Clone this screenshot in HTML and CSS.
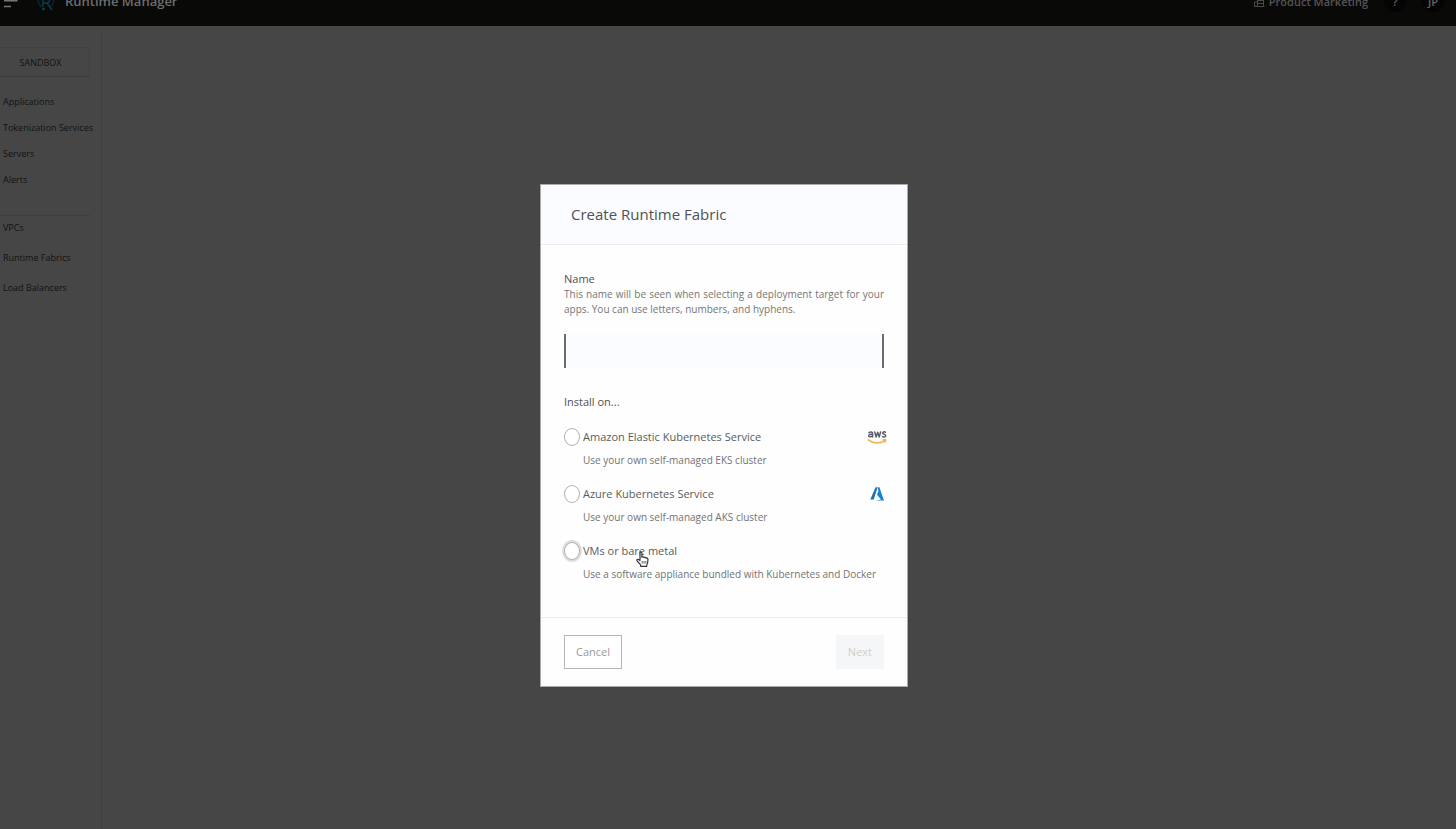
FILE: index.html
```html
<!DOCTYPE html>
<html lang="en">
<head>
<meta charset="utf-8">
<title>Runtime Manager</title>
<link rel="stylesheet" href="styles.css">
</head>
<body>
<div class="app">
  <header class="topbar">
    <button class="icon-button menu" aria-label="Menu">
      <svg width="16" height="14" viewBox="0 0 16 14" fill="none" stroke="#777" stroke-width="1.6"><path d="M2 1.500h13.500M2 6.700h13.500M2 12.500h7"/></svg>
    </button>
    <svg class="logo" width="18" height="20" viewBox="0 0 18 20" fill="none" stroke="#0b3a4d" stroke-width="1.5"><path d="M5 16C2 14 1 11 1.500 8M16.500 8C17 11 16 14 13 16" stroke="#0a2530"/><path d="M6 15.500V6h3.500a3 3 0 0 1 0 6H6M10 12l5 7"/><circle cx="6.500" cy="18" r=".8"/></svg>
    <span class="product">Runtime Manager</span>
    <a class="org" href="#">
      <svg width="12" height="12" viewBox="0 0 12 12" fill="none" stroke="#4a4a4a"><path d="M1.500 11.500V7h3M4.500 11.500V1.500h6v10M1 11.500h10.500M4.500 5.500h6M4.500 8.500h6"/></svg>
      Product Marketing
    </a>
    <button class="icon-button round">?</button>
    <button class="icon-button round">JP</button>
  </header>
  <div class="workspace">
    <nav class="sidebar">
      <button class="environment">SANDBOX</button>
      <div class="links">
        <a href="#">Applications</a>
        <a href="#">Tokenization Services</a>
        <a href="#">Servers</a>
        <a href="#">Alerts</a>
      </div>
      <div class="links links-wide">
        <a href="#">VPCs</a>
        <a href="#">Runtime Fabrics</a>
        <a href="#">Load Balancers</a>
      </div>
    </nav>
    <main class="content"></main>
  </div>
</div>

<div class="overlay">
  <form class="modal" role="dialog" aria-labelledby="title">
    <h1 class="modal-title" id="title">Create Runtime Fabric</h1>
    <div class="modal-body">
      <label class="label" for="name">Name</label>
      <p class="help" id="name-help">This name will be seen when selecting a deployment target for your apps. You can use letters, numbers, and hyphens.</p>
      <input class="name-input" id="name" type="text" aria-describedby="name-help">
      <fieldset class="targets">
        <legend class="label">Install on...</legend>
        <div class="option">
          <input type="radio" name="target" id="eks">
          <label for="eks">Amazon Elastic Kubernetes Service</label>
          <svg class="brand" width="20" height="14" viewBox="0 0 20 14" fill="none" stroke-linecap="round" stroke-linejoin="round"><g stroke="#5b6068" stroke-width="1.500"><path d="M2 2.600C3.500 1.500 5.600 1.700 5.600 3.500V7M5.600 4.300C3.500 4 1.500 4.500 1.700 5.900C2 7.400 4.700 7 5.600 5.600"/><path d="M7.700 2l1.400 5L10.700 2.300L12.200 7L13.600 2"/><path d="M18.500 2.200C17 1.500 15.600 2 15.700 3.100C15.900 4.500 18.800 4 18.700 5.700C18.600 7.300 16.700 7.300 15.500 6.600"/></g><path d="M1.500 10C6 13.700 13.500 13.700 18 10.500M16.300 9.900l2.300-.2l-.5 2.200" stroke="#f5b65a" stroke-width="1.700"/></svg>
          <p class="option-help">Use your own self-managed EKS cluster</p>
        </div>
        <div class="option">
          <input type="radio" name="target" id="aks">
          <label for="aks">Azure Kubernetes Service</label>
          <svg class="brand" width="20" height="14" viewBox="0 0 20 14"><path d="M8 1.400L3.300 12.400H6.700L10.600 .3H8.600Z" fill="#1b6fb5"/><path d="M10.700 .2H12.400L17 13.600H9L14 12.400L10 7.700L11.400 4Z" fill="#1683d0"/></svg>
          <p class="option-help">Use your own self-managed AKS cluster</p>
        </div>
        <div class="option hovered">
          <input type="radio" name="target" id="vm">
          <label for="vm">VMs or bare metal</label>
          <p class="option-help">Use a software appliance bundled with Kubernetes and Docker</p>
          <svg class="pointer" width="13" height="16" viewBox="0 0 13 16" fill="#fff" stroke="#333" stroke-width="1.200" stroke-linejoin="round"><path d="M4 9.500V1.800C4 .5 5.900 .5 5.900 1.800V6.200C6.500 5.500 7.700 5.700 7.900 6.500C8.700 5.900 9.700 6.200 9.900 7.100C10.800 6.700 11.900 7.200 11.900 8.300C12 11 11.700 12.500 10.700 14V15.300H4.700V14C3.500 12.500 2.500 11.500 1 9.600C.5 8.500 1.600 7.900 2.500 8.500Z"/><path d="M6.200 10v2.500M8 10v2.500M9.800 10v2.500" stroke-width=".8"/></svg>
        </div>
      </fieldset>
    </div>
    <div class="modal-footer">
      <button class="button" type="button">Cancel</button>
      <button class="button primary" type="submit" disabled>Next</button>
    </div>
  </form>
</div>
</body>
</html>
```
FILE: styles.css
```css
* { box-sizing: border-box; }

body {
  margin: 0;
  background: #464646;
  color: #121212;
  font-family: "Open Sans", "Noto Sans", sans-serif;
  font-size: 10px;
}

a { color: inherit; text-decoration: none; }
button, input { font: inherit; }
p, h1, fieldset { margin: 0; }

.app {
  display: flex;
  flex-direction: column;
  height: 100vh;
  overflow: hidden;
}

/* The bar is scrolled halfway out of the window. */
.topbar {
  display: flex;
  align-items: center;
  flex: none;
  height: 50px;
  margin-top: -24px;
  padding: 0 12px 0 2px;
  background: #090908;
  color: #6e6e6e;
}

.icon-button {
  display: flex;
  align-items: center;
  justify-content: center;
  padding: 0;
  border: 0;
  background: none;
  color: inherit;
}

.logo { margin: 0 10px 0 19px; }
.product { font-size: 13px; font-weight: 600; }

.org {
  display: flex;
  align-items: center;
  gap: 4px;
  margin-left: auto;
  color: #555;
  font-size: 11px;
  font-weight: 600;
}

.round {
  width: 22px;
  height: 22px;
  margin-left: 16px;
  border-radius: 50%;
  background: #040404;
  color: #666;
  font-size: 11px;
  font-weight: 600;
}

.workspace { display: flex; flex: 1; }

.sidebar {
  flex: none;
  width: 102px;
  margin-top: 5px;
  padding-top: 16px;
  border-right: 1px solid #3f3f3f;
  font-size: 9px;
}

.environment {
  display: block;
  width: 90px;
  height: 30px;
  padding: 0 8px 0 0;
  border: 1px solid #404040;
  border-left: 0;
  border-bottom-color: #3a3a3a;
  background: none;
  color: inherit;
}

.links {
  display: flex;
  flex-direction: column;
  gap: 12px;
  width: 90px;
  margin-top: 18px;
  padding-left: 3px;
  line-height: 14px;
  white-space: nowrap;
}

.links-wide {
  gap: 16px;
  margin-top: 28px;
  padding-top: 5px;
  border-top: 1px solid #3e3e3e;
}

.content { flex: 1; }

.overlay {
  position: fixed;
  inset: 0;
  display: flex;
  align-items: center;
  justify-content: center;
  padding: 41px 8px 0 0;
}

.modal {
  width: 368px;
  border: 1px solid #aaa;
  background: #fefefe;
  color: #555;
}

.modal-title {
  padding: 0 30px;
  border-bottom: 1px solid #ebecee;
  background: #fafcff;
  color: #505255;
  font-size: 15px;
  font-weight: 400;
  line-height: 59px;
}

.modal-body { padding: 26px 23px 33px; }

.label {
  display: block;
  padding: 0;
  color: #505050;
  font-size: 11px;
  line-height: 16px;
}

.help {
  color: #757575;
  line-height: 15px;
  text-align: justify;
}

.name-input {
  display: block;
  width: 100%;
  height: 34px;
  margin: 17px 0 26px;
  padding: 0 10px;
  border: solid #6b6d70;
  border-width: 0 2px;
  border-radius: 0;
  outline: none;
  background: #fafcff;
}

.targets {
  padding: 0;
  border: 0;
}

.option {
  position: relative;
  display: grid;
  grid-template-columns: 16px 1fr auto;
  column-gap: 3px;
  align-items: center;
  margin-top: 15px;
  color: #5a5c5e;
  font-size: 11px;
}

.targets .label + .option { margin-top: 18px; }

.option input {
  appearance: none;
  width: 16px;
  height: 18px;
  margin: 0;
  border: 1px solid #b0b0b0;
  border-radius: 50%;
  background: #fff;
}

.hovered input { box-shadow: 0 0 0 2px #dedede; }

.brand { margin-right: -3px; }

.option-help {
  grid-column: 2 / -1;
  margin-top: 5px;
  color: #727272;
  font-size: 10px;
  line-height: 19px;
}

.pointer {
  position: absolute;
  left: 72px;
  top: 9px;
}

.modal-footer {
  display: flex;
  justify-content: space-between;
  padding: 17px 23px;
  border-top: 1px solid #ececec;
}

.button {
  height: 34px;
  padding: 0 11px;
  border: 1px solid #b5b5b5;
  background: #fff;
  color: #999;
  font-size: 11px;
}

.primary {
  border-color: #f5f6f7;
  background: #f5f6f7;
  color: #cfcfcf;
}
```
